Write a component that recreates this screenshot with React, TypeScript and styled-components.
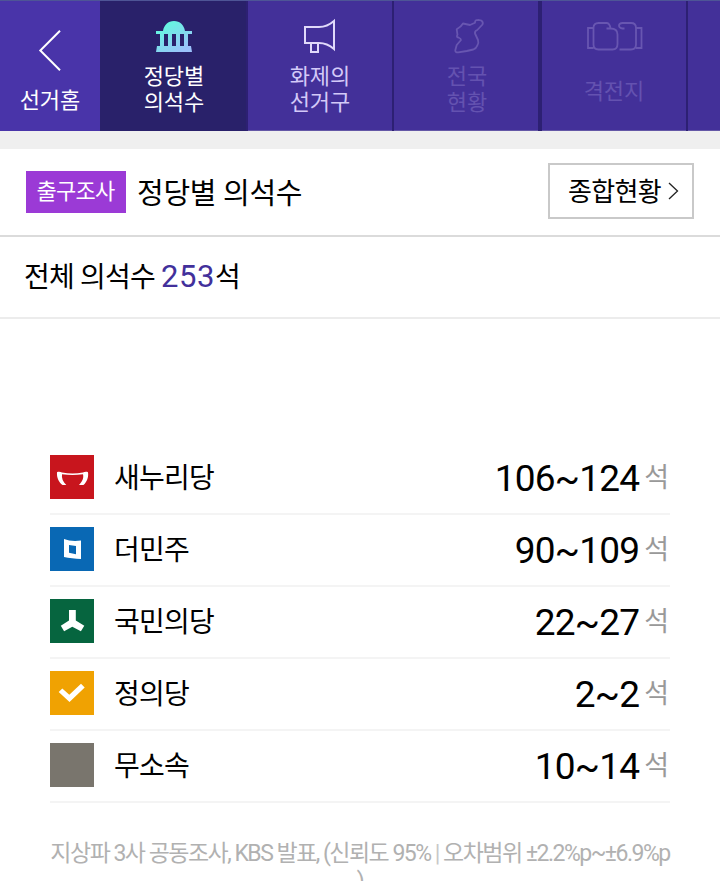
import React from "react";
import styled, { createGlobalStyle } from "styled-components";

const GlobalStyle = createGlobalStyle`
  * { box-sizing: border-box; }
  html, body { margin: 0; background: #fff; }
  body { height: 881px; overflow: hidden; }
  body { font-family: Roboto, "Noto Sans CJK KR", sans-serif; color: #000; }
`;

const Page = styled.div`
  width: 720px;
  height: 881px;
  overflow: hidden;
  background: #fff;
`;

const Nav = styled.nav`
  display: flex;
  height: 131px;
  border-top: 1px solid #4e5596;
  overflow: hidden;
`;

const Tab = styled.a<{ $w: number; $bg: string; $fg: string; $edge?: number; $line?: boolean; $indent?: number }>`
  flex: 0 0 ${(p) => p.$w}px;
  display: flex;
  flex-direction: column;
  align-items: center;
  padding-left: ${(p) => p.$indent ?? 0}px;
  background: ${(p) => p.$bg};
  color: ${(p) => p.$fg};
  border-right: ${(p) => p.$edge ?? 0}px solid #2d2073;
  box-shadow: ${(p) => (p.$line ? "inset 0 -1px #6457a6" : "none")};
`;

const TabIcon = styled.svg<{ $top: number }>`
  display: block;
  flex: none;
  margin-top: ${(p) => p.$top}px;
  overflow: visible;
`;

const TabLabel = styled.span<{ $gap: number }>`
  margin-top: ${(p) => p.$gap}px;
  font-size: 22px;
  line-height: 26px;
  text-align: center;
  white-space: pre;
`;

const Band = styled.div`
  height: 18px;
  background: #efefef;
`;

const Header = styled.header`
  display: flex;
  align-items: center;
  height: 88px;
  padding: 0 26px;
  border-bottom: 2px solid #dbdbdb;
`;

const Badge = styled.span`
  width: 100px;
  height: 42px;
  padding-right: 1px;
  background: #9b3ad6;
  color: #fff;
  font-size: 22px;
  line-height: 41px;
  letter-spacing: -0.8px;
  text-align: center;
`;

const Title = styled.h1`
  margin: 4px auto 0 11px;
  font-size: 29px;
  font-weight: 400;
  line-height: 40px;
  letter-spacing: -0.3px;
`;

const MoreButton = styled.button`
  display: flex;
  align-items: center;
  gap: 7px;
  width: 146px;
  height: 56px;
  margin-top: -2px;
  padding: 0 0 0 18px;
  border: 2px solid #c9c9c9;
  background: #fff;
  color: #000;
  font: inherit;
  font-size: 26px;
  line-height: 52px;
  letter-spacing: -0.7px;
`;

const MoreText = styled.span`
  padding-top: 2px;
`;

const Total = styled.p`
  height: 82px;
  margin: 0;
  padding: 0 24px;
  border-bottom: 2px solid #ececec;
  font-size: 28px;
  line-height: 80px;
  letter-spacing: -0.8px;
`;

const TotalNumber = styled.em`
  font-style: normal;
  font-size: 31px;
  letter-spacing: 0.5px;
  color: #42309b;
`;

const PartyList = styled.ul`
  margin: 124px 50px 0;
  padding: 0;
  list-style: none;
`;

const PartyRow = styled.li`
  display: flex;
  align-items: center;
  height: 72px;
  border-bottom: 2px solid #f4f4f4;
`;

const Emblem = styled.svg<{ $color: string }>`
  width: 44px;
  height: 44px;
  margin-top: -2px;
  background: ${(p) => p.$color};
`;

const PartyName = styled.span`
  margin: -4px auto 0 20px;
  font-size: 28px;
  letter-spacing: -0.8px;
`;

const Seats = styled.span`
  margin-top: 2px;
  font-size: 37px;
  line-height: 60px;
  letter-spacing: -0.8px;
`;

const Unit = styled.span`
  margin: -6px 1px 0 5px;
  font-size: 27px;
  color: #999;
`;

const Note = styled.p`
  margin: 37px 50px 0;
  font-size: 23px;
  line-height: 28px;
  letter-spacing: -1.52px;
  text-align: center;
  white-space: nowrap;
  color: #b1b1b1;
`;

const Divider = styled.span`
  color: #c8c8c8;
`;

const purple = "#433099";

const parties = [
  {
    name: "새누리당", seats: "106~124", color: "#c8151d",
    mark: <path d="M7 17.200c1.500-.8 3.500-.5 5 .3q10.500 2 21 0c1.500-.8 3.500-1.100 5-.3.800 5-1.200 10-4.600 12.800h-4.400c3-3 5-6.500 4-10.700q-10.500 1.200-21 0c-.6 3.800 1 7.700 4.300 10.700h-3.800C9 27.500 6.500 22.500 7 17.200z" />,
  },
  {
    name: "더민주", seats: "90~109", color: "#0968b4",
    mark: <path fillRule="evenodd" d="M14 12c5 2 11 2.500 17 1.500v18.500c-6-.3-12-.8-17-2zM19 18v7.800l7 1.500V19z" />,
  },
  {
    name: "국민의당", seats: "22~27", color: "#06653f",
    mark: <path d="M19 11h6.800v10.500l8.500 5.300-3.400 5.500-8.600-4.600-8.200 4.600-3.300-5.500 8.200-5.300z" />,
  },
  {
    name: "정의당", seats: "2~2", color: "#f0a202",
    mark: <path d="M8.700 21l3.600-3.600 7 6.400 11.700-11 3.700 3.600L19.500 31z" />,
  },
  { name: "무소속", seats: "10~14", color: "#79756d", mark: null },
];

export default function App() {
  return (
    <Page>
      <GlobalStyle />
      <Nav>
        <Tab $w={100} $bg="#4934a9" $fg="#fff">
          <TabIcon $top={29} width="22" height="41" fill="none" stroke="#fff" strokeWidth="2">
            <path d="M21 .7 1.300 20.500 21 40.300" />
          </TabIcon>
          <TabLabel $gap={17}>선거홈</TabLabel>
        </Tab>
        <Tab $w={148} $bg="#29216a" $fg="#fff" $edge={2} $indent={2}>
          <TabIcon $top={20} width="36" height="31">
            <defs>
              <linearGradient id="dome" x1="0" y1="0" x2=".7" y2="1">
                <stop offset=".2" stopColor="#65f6e0" />
                <stop offset="1" stopColor="#9bc2fb" />
              </linearGradient>
            </defs>
            <path fill="url(#dome)" d="M0 10h7C8 4 12 0 18 0s10 4 11 10h7v3h-4v12h3l1 6H0l1-6h3V13H0zM8 13v12h4V13zM16 13v12h4V13zM24 13v12h4V13z" fillRule="evenodd" />
          </TabIcon>
          <TabLabel $gap={12}>{"정당별\n의석수"}</TabLabel>
        </Tab>
        <Tab $w={146} $bg={purple} $fg="#d3c9f8" $edge={2} $line>
          <TabIcon $top={19} width="32" height="33" fill="none" stroke="#e0d9fa" strokeWidth="2">
            <path d="M1 7h14c6 0 11-2.500 15-6v28c-4-3.500-9-6-15-6H1zM7 23v9h7v-9" />
          </TabIcon>
          <TabLabel $gap={11}>{"화제의\n선거구"}</TabLabel>
        </Tab>
        <Tab $w={148} $bg={purple} $fg="#6452b0" $edge={4} $line $indent={2}>
          <TabIcon $top={17} width="26" height="35" fill="none" stroke="#6856b1" strokeWidth="1.800" strokeLinejoin="round">
            <path d="M2.700 11.300Q7 9 9 5.500L16 7l5-2.300Q21 2 23 2.200l2-.2 2.500.7q2 1.500 1 3.800L23.300 12Q20.500 13 21 15.500L24 22q1 3-.700 5.500-1 3-4 4L12.700 33l-8.400 1.300q-3.200.2-3-2l1.400-5.300L7 22q0-1.500-2.500-2.500-2.500-.5-1-2.700Z" />
          </TabIcon>
          <TabLabel $gap={11}>{"전국\n현황"}</TabLabel>
        </Tab>
        <Tab $w={146} $bg={purple} $fg="#6452b0" $edge={2} $line>
          <TabIcon $top={21} width="55" height="28" fill="none" stroke="#6856b1" strokeWidth="1.800">
            <path d="M6.500 6H1v20h5.500M19.500 6.500h4q7 0 7 6V22q0 5.500-5 5.500H11.500q-5 0-5-5V6q0-5 5-5h8q3 0 4 5M49 6h5.500v20H49M37.500 6.500h-2q-3.500-.5-3.500-3 0-2.500 3.500-2.500H44q5 0 5 5v16.500q0 5-5 5H32.500" />
          </TabIcon>
          <TabLabel $gap={29}>격전지</TabLabel>
        </Tab>
        <Tab $w={32} $bg={purple} $fg="#fff" $line />
      </Nav>
      <Band />
      <Header>
        <Badge>출구조사</Badge>
        <Title>정당별 의석수</Title>
        <MoreButton>
          <MoreText>종합현황</MoreText>
          <svg width="11" height="18" fill="none" stroke="#222" strokeWidth="1.3">
            <path d="M1 1l8.500 8L1 17" />
          </svg>
        </MoreButton>
      </Header>
      <Total>
        전체 의석수 <TotalNumber>253</TotalNumber>석
      </Total>
      <PartyList>
        {parties.map((p) => (
          <PartyRow key={p.name}>
            <Emblem $color={p.color} viewBox="0 0 44 44" fill="#fff">{p.mark}</Emblem>
            <PartyName>{p.name}</PartyName>
            <Seats>{p.seats}</Seats>
            <Unit>석</Unit>
          </PartyRow>
        ))}
      </PartyList>
      <Note>
        지상파 3사 공동조사, KBS 발표, (신뢰도 95% <Divider>|</Divider> 오차범위 ±2.2%p~±6.9%p
        <br />)
      </Note>
    </Page>
  );
}
